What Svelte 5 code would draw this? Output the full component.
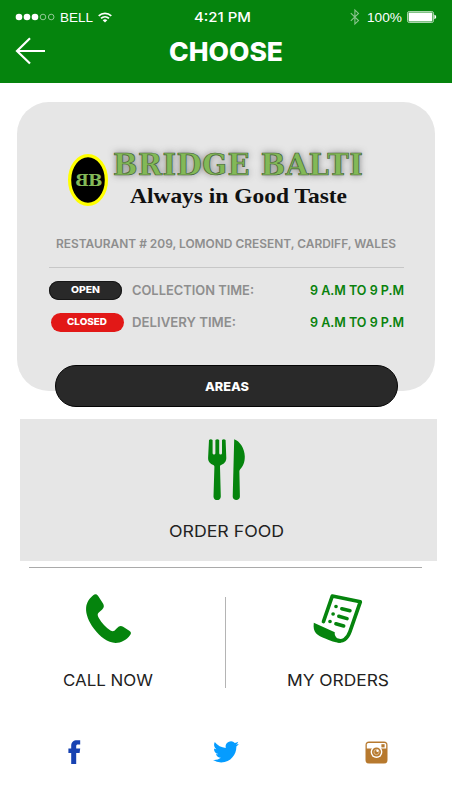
<script>
  const hours = [
    { state: 'OPEN', sw: 29, label: 'COLLECTION TIME:', lw: 122 },
    { state: 'CLOSED', sw: 40, label: 'DELIVERY TIME:', lw: 104 }
  ];
</script>

{#snippet fit(text, width, size, kind = '')}
  <svg class="fit {kind}" {width} height={size} aria-label={text}>
    <text x="0" y={size * 0.865} font-size={size} textLength={width} lengthAdjust="spacingAndGlyphs">{text}</text>
  </svg>
{/snippet}

<main>
  <header>
    <div class="status">
      <svg class="signal" width="41" height="10" viewBox="0 0 41 10">
        <g fill="#fff"><circle cx="4" cy="5" r="3.3" /><circle cx="12" cy="5" r="3.3" /><circle cx="20" cy="5" r="3.3" /></g>
        <g fill="none" stroke="#fff" stroke-width=".7" opacity=".8"><circle cx="28" cy="5" r="2.8" /><circle cx="36.2" cy="5" r="2.8" /></g>
      </svg>
      <span class="carrier">{@render fit('BELL', 33, 13.4, 'sys')}</span>
      <svg class="wifi" width="14" height="11" viewBox="0 0 14 11">
        <g fill="none" stroke="#fff" stroke-width="1.7"><path d="M.7 3.9C4.3.5 9.7.5 13.3 3.9" /><path d="M3 6.4c2.3-2.1 5.7-2.1 8 0" /></g>
        <path d="M4.7 8.2c1.4-1.2 3.2-1.2 4.6 0L7 10.6z" fill="#fff" />
      </svg>
      <span class="clock">{@render fit('4:21 PM', 57, 13.6, 'sys medium')}</span>
      <svg class="bt" width="10" height="16" viewBox="0 0 10 16"><path d="M.8 4.2 8.5 11.6 4.9 15V1l3.6 3.4L.8 11.8" fill="none" stroke="#8cc58f" stroke-width="1.1" /></svg>
      <span class="pct">{@render fit('100%', 35, 13.6, 'sys')}</span>
      <svg class="battery" width="30" height="12" viewBox="0 0 30 12">
        <rect x=".5" y=".5" width="26" height="11" rx="1.8" fill="none" stroke="#d6ebd7" stroke-width=".8" />
        <rect x="1.6" y="1.6" width="23.8" height="8.8" rx=".8" fill="#fff" />
        <path d="M27.4 3.8c2.4.5 2.4 3.9 0 4.4z" fill="#fff" />
      </svg>
    </div>
    <div class="titlebar">
      <svg width="31" height="28" viewBox="0 0 31 28"><path d="M15 1.3 2 14l13 12.5M2 14h28" fill="none" stroke="#fff" stroke-width="2.2" /></svg>
      <h1>{@render fit('CHOOSE', 114, 25.6, 'heavy')}</h1>
    </div>
  </header>

  <section class="card">
    <div class="brand">
      <svg width="40" height="52" viewBox="0 0 40 52">
        <ellipse cx="20" cy="26" rx="18.4" ry="24.4" fill="#000" stroke="#ff0" stroke-width="3.2" />
        <g class="mono" font-size="17">
          <text transform="translate(20.8 32.3) scale(-1 1)" x="0" y="0" textLength="13.5" lengthAdjust="spacingAndGlyphs">B</text>
          <text x="20" y="32.3" textLength="14.5" lengthAdjust="spacingAndGlyphs">B</text>
        </g>
      </svg>
      <div class="names">
        <div class="name">BRIDGE BALTI</div>
        <svg class="tag" width="217" height="25"><text x="0" y="19" font-size="21" textLength="217" lengthAdjust="spacingAndGlyphs">Always in Good Taste</text></svg>
      </div>
    </div>
    <p class="address">{@render fit('RESTAURANT # 209, LOMOND CRESENT, CARDIFF, WALES', 340, 12, 'semi')}</p>
    <hr />
    <div class="hours">
      {#each hours as h}
        <div class="row" class:closed={h.state === 'CLOSED'}>
          <span class="pill">{@render fit(h.state, h.sw, 9.4, 'heavy')}</span>
          <span class="label">{@render fit(h.label, h.lw, 12.8, 'semi')}</span>
          <span class="time">{@render fit('9 A.M TO 9 P.M', 94, 12.8, 'semi')}</span>
        </div>
      {/each}
    </div>
    <button>{@render fit('AREAS', 44, 12.4, 'heavy')}</button>
  </section>

  <section class="order">
    <svg width="38" height="62" viewBox="208 439 38 62" fill="#05840d">
      <path d="M209 440q1.8-1.4 3.6 0v13.2q0 1.2 1.4 1.2t1.4-1.2V440q1.9-1.4 3.8 0v13.2q0 1.2 1.4 1.2t1.4-1.2V440q1.8-1.4 3.6 0l.7 17.8c.1 4.2-2.7 6.3-5.2 7.2-.9.4-1.2.8-1.1 1.8l.8 29.6c.1 4.9-7.4 4.9-7.3 0l.9-29.6c0-1-.3-1.4-1.2-1.8-2.6-1-5.3-3.3-5.1-7.2z" />
      <path d="M234.2 439.2c5.6 1.8 10.5 9.3 10.6 17.3 0 6.2-1.9 9.5-4.4 12.6-.8 1-1.1 2-1 3.2l.5 24.3c.1 4.6-7.3 4.6-7.2 0z" />
    </svg>
    {@render fit('ORDER FOOD', 115, 16.4)}
  </section>
  <hr class="rule" />

  <section class="actions">
    <div>
      <svg width="46" height="50" viewBox="85 593 46 50">
        <path d="M93.2 595.3Q95.8 593.1 98 595.8l5 7.8q2 3.3-.8 5.9l-3.4 3c-1.5 1.3-1.5 3 0 5.5 3 5.1 7 9.5 11.7 12.4 2 1.2 3.4 1.2 4.9-.6l1.7-1.9q2.8-3 6-1.2l6.2 4.1q2.9 1.8.7 4.4c-3.4 4.7-8.9 7.7-14.4 7.7-7.9 0-15.6-5.8-21.8-14.3-5.1-7-8.2-14.5-7.7-20.9.4-5.2 3.5-9.5 7.1-12.4z" fill="#05840d" />
      </svg>
      {@render fit('CALL NOW', 90, 16)}
    </div>
    <i></i>
    <div>
      <svg width="50" height="50" viewBox="313 593 50 50">
        <path d="M323.5 621.5 332.3 596 360.3 601.8 350 631.5C347.3 639 342.5 642.5 337.5 640.3" fill="none" stroke="#05840d" stroke-width="3.7" stroke-linejoin="round" stroke-linecap="round" />
        <path d="M313.8 622.7 334.8 632.2c-.5 2.8 1.2 6.4 5.2 7.2l1 3.1c-4 1-9.5-1.3-15.2-3.7-8.9-3.7-13.2-5.9-12-16.1z" fill="#05840d" />
        <g stroke="#05840d" stroke-width="3.5" stroke-linecap="round"><path d="M335.9 606.5h.2M333 614.1h.2M329.9 621.5h.2M341.8 608.7l8.2 2M338.8 616.2l8.3 2.4M335.9 623.7l7.8 2.3" /></g>
      </svg>
      {@render fit('MY ORDERS', 102, 16)}
    </div>
  </section>

  <footer>
    <svg width="13" height="25" viewBox="0 0 13 25"><path d="M3.2 24V13H.4V8.6h2.8V6.2C3.2 2.2 5.4.3 9 .3h3.2v4.3H10c-1.4 0-1.8.6-1.8 1.8v2.2h4L11.6 13H8.2v11z" fill="#1742b2" /></svg>
    <svg class="bird" width="26" height="22" viewBox="0 0 24 20" preserveAspectRatio="none"><path d="M23.95 2.57c-.88.39-1.83.65-2.82.77a4.96 4.96 0 0 0 2.16-2.72c-.95.55-2 .96-3.13 1.18a4.92 4.92 0 0 0-8.38 4.48A13.98 13.98 0 0 1 1.64.93a4.93 4.93 0 0 0 1.52 6.57 4.9 4.9 0 0 1-2.23-.61v.06a4.92 4.92 0 0 0 3.95 4.83 5 5 0 0 1-2.22.08 4.93 4.93 0 0 0 4.6 3.42A9.87 9.87 0 0 1 .01 17.3a13.95 13.95 0 0 0 7.55 2.21c9.05 0 14-7.5 14-13.98 0-.21 0-.42-.02-.63a9.94 9.94 0 0 0 2.4-2.33z" fill="#059cff" /></svg>
    <svg width="23" height="23" viewBox="0 0 23 23">
      <rect x=".5" y=".5" width="22" height="22" rx="3.5" fill="#b7792e" />
      <path d="M1.8 3.5q0-1.6 1.6-1.6h16.2q1.6 0 1.6 1.6V7.4H1.8z" fill="#fff" />
      <rect x="16.4" y="3.2" width="3.2" height="3.2" fill="#b7792e" />
      <circle cx="11.5" cy="11" r="5.9" fill="#fff" /><circle cx="11.5" cy="11" r="4.5" fill="#b7792e" />
      <circle cx="11.5" cy="11" r="2.6" fill="none" stroke="#e3c9a7" stroke-width=".8" />
      <circle cx="12.5" cy="9.8" r="1.2" fill="#fff" />
    </svg>
  </footer>
</main>

<style>
  :global(body) { margin: 0; background: #fff; }
  main { width: 452px; height: 800px; overflow: hidden; background: #fff; color: #222; font-family: Inter, "Liberation Sans", sans-serif; }
  svg { display: block; flex: none; overflow: visible; }
  text { fill: currentColor; }
  .sys { font-family: "Liberation Sans", sans-serif; }
  .medium { font-family: Inter, sans-serif; font-weight: 500; }
  .semi { font-weight: 600; }
  .heavy { font-weight: 800; }
  h1, p, hr { margin: 0; }
  header { height: 83px; box-sizing: border-box; padding-top: 8px; background: #05840d; color: #fff; }
  .status { display: flex; align-items: center; height: 18px; padding-left: 15px; }
  .carrier { margin-left: 4px; }
  .wifi { margin-left: 5px; }
  .clock { margin-left: 82px; }
  .bt { margin-left: 99px; }
  .pct { margin-left: 7px; }
  .battery { margin-left: 5px; }
  .titlebar { display: flex; align-items: center; height: 50px; padding-left: 15px; }
  h1 { margin: 1px 0 0 123px; }
  .card { margin: 19px 17px 0; height: 289px; padding: 50px 31px 0 32px; box-sizing: border-box; background: #e6e6e6; border-radius: 32px; }
  .brand { display: flex; height: 54px; padding-left: 19px; }
  .brand > svg { margin-top: 2px; }
  .mono { font-family: "DejaVu Serif", serif; font-weight: 700; color: #83b957; }
  .names { margin-left: 5px; }
  .name { height: 28px; line-height: 26px; white-space: nowrap; font-size: 29px; font-family: "DejaVu Serif", serif; font-weight: 700; color: #83b957; letter-spacing: .48px; -webkit-text-stroke: .7px #426135; text-shadow: 0 0 7px #555c; }
  .tag { margin: 4px 0 0 17px; color: #111; font-family: "Liberation Serif", serif; font-weight: 700; }
  .address { padding: 32px 0 0 7px; height: 29px; color: #8e8e8e; }
  .card hr { border: 0; height: 1px; width: 355px; background: #c7c7c7; }
  .hours { height: 97px; box-sizing: border-box; padding-top: 13px; }
  .row { display: flex; align-items: center; height: 20px; margin-bottom: 11px; }
  .pill { width: 73px; height: 19px; border-radius: 10px; background: #292929; box-shadow: inset 0 0 0 1px #171717; display: grid; place-items: center; color: #fff; }
  .hours .row:first-child { margin-top: -1px; margin-bottom: 12px; }
  .closed .pill { margin-left: 2px; background: #e21817; box-shadow: none; }
  .label { width: 179px; margin-left: 10px; color: #8e8e8e; }
  .closed .label { margin-left: 8px; }
  .time { color: #0a820d; }
  button { display: grid; place-items: center; margin: 0 0 0 6px; width: 343px; height: 42px; padding: 0; border: 1px solid #050505; border-radius: 21px; background: #292929; color: #fff; font-family: inherit; }
  .order { margin: 28px 15px 0 20px; height: 142px; box-sizing: border-box; padding: 20px 4px 0 0; display: flex; flex-direction: column; align-items: center; gap: 22px; background: #e6e6e6; }
  .rule { border: 0; height: 1px; background: #aaa; margin: 6px 30px 0 29px; }
  .actions { display: flex; height: 120px; padding-top: 25px; }
  .actions div { width: 216px; display: flex; flex-direction: column; align-items: center; gap: 29px; }
  .actions div:last-child { width: 224px; }
  .actions div:first-child { margin-right: 9px; }
  .actions i { width: 1px; height: 91px; margin-top: 4px; background: #b4b4b4; }
  footer { display: flex; align-items: center; justify-content: space-between; height: 26px; padding: 26px 64px 0 68px; }
  .bird { margin-left: 5px; }
</style>
